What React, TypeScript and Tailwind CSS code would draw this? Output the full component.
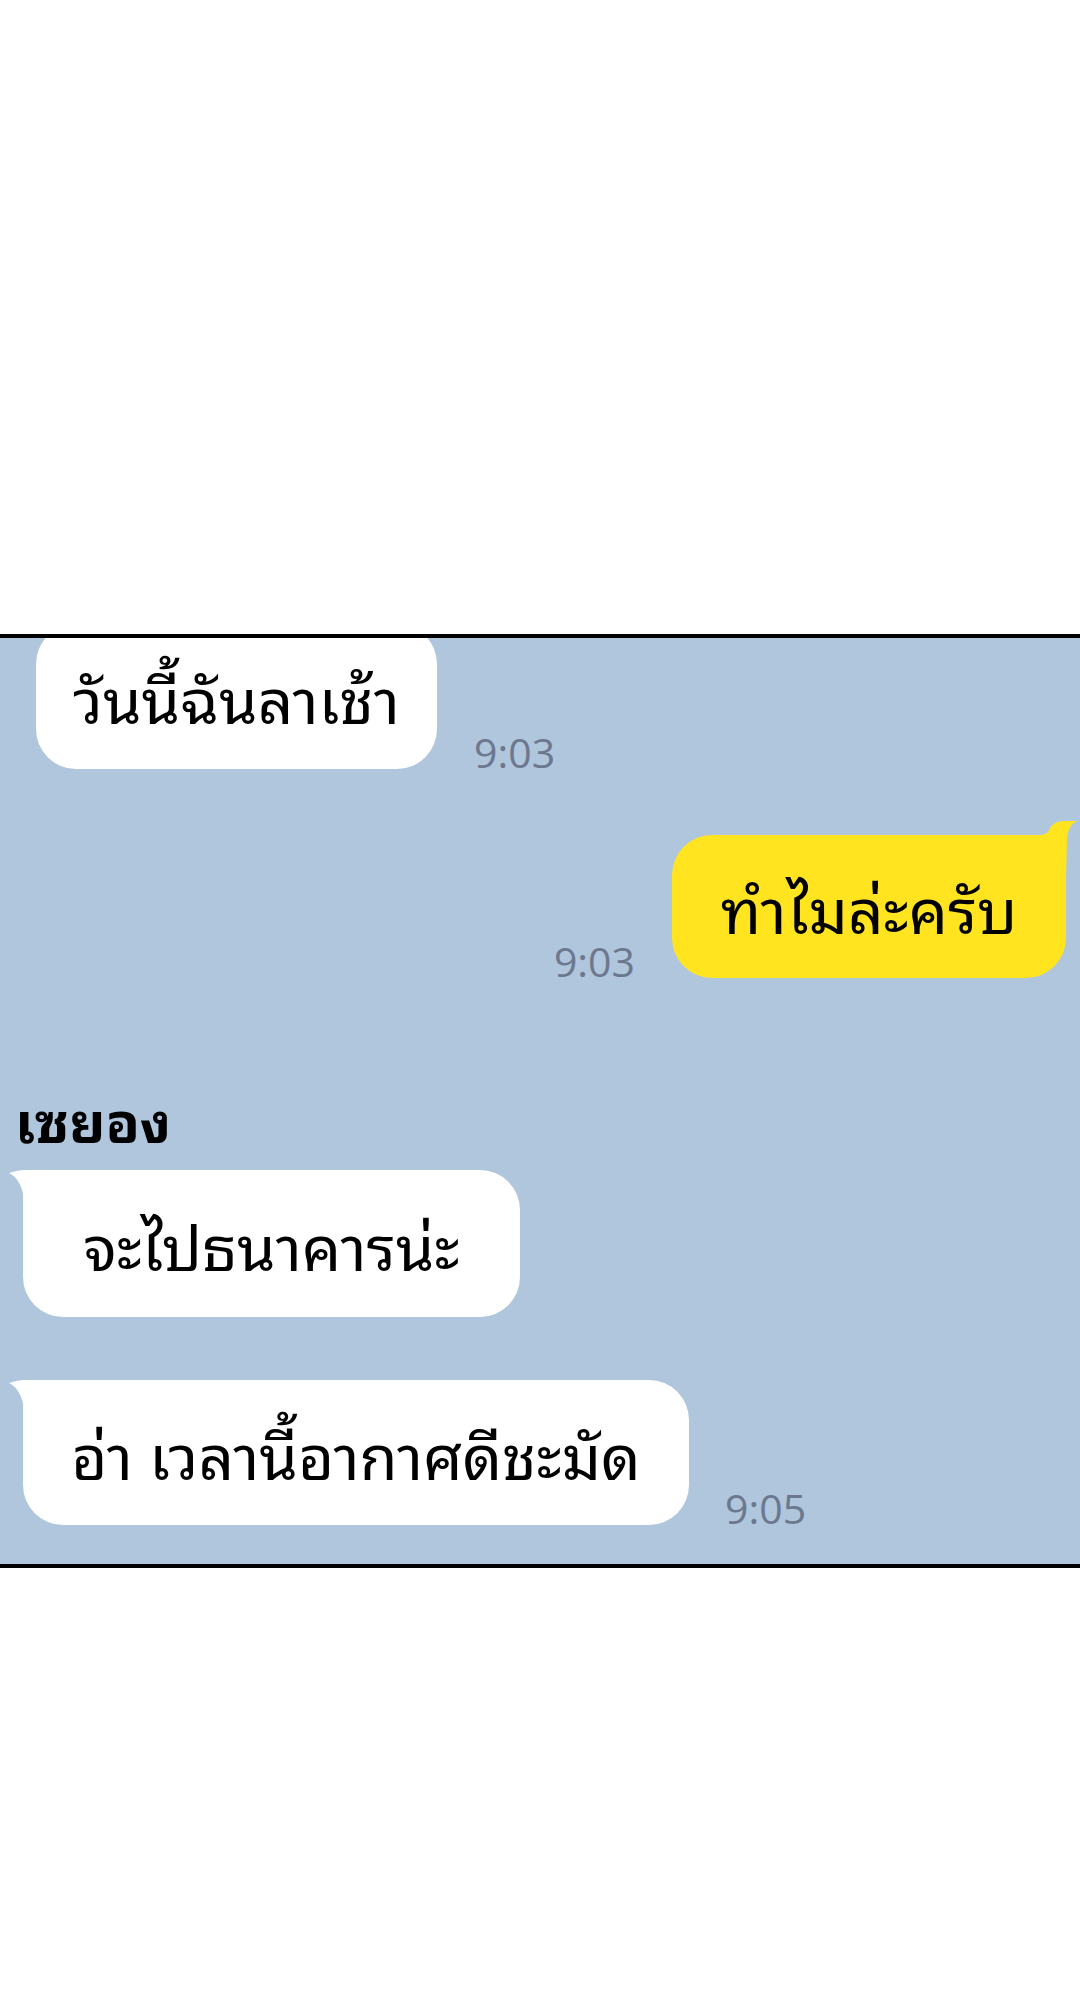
const thai = {
  fontFamily:
    '"Noto Sans Thai Looped", "Noto Looped Thai", "Noto Sans Thai UI", Loma, Garuda, Waree, "Noto Sans Thai", "Noto Sans", sans-serif',
}

const LeftTail = () => (
  <svg className="absolute -left-[14px] top-0" width="16" height="40" viewBox="0 0 16 40">
    <path d="M0 3 Q9 0 16 0 L16 40 Q15 10 0 3 Z" fill="#ffffff" />
  </svg>
)

const RightTail = () => (
  <svg className="absolute -right-[12px] -top-[16px]" width="40" height="60" viewBox="0 0 40 60">
    <path d="M0 16 L2 16 Q10 16 12 9 Q16 2 26 2 L39 2 Q30 6 29 20 L28 60 L0 60 Z" fill="#ffe41f" />
  </svg>
)

const Time = ({ children, className = '' }: { children: string; className?: string }) => (
  <span
    className={`text-[41px] leading-none text-[#6d788f] ${className}`}
    style={{ fontFamily: '"Open Sans", "Noto Sans", sans-serif' }}
  >
    {children}
  </span>
)

export default function App() {
  return (
    <div className="min-h-[2000px] w-[1080px] bg-white">
      <div className="h-[634px]" />
      <div className="h-[934px] overflow-hidden border-y-4 border-black bg-[#afc6dd]">
        {/* row 1 */}
        <div className="-mt-[14px] ml-[36px] flex items-end">
          <div
            className="flex h-[145px] w-[401px] items-center justify-center rounded-[40px] bg-white text-[62px] text-black"
            style={thai}
          >
            วันนี้ฉันลาเช้า
          </div>
          <Time className="-mb-[4px] ml-[37px]">9:03</Time>
        </div>

        {/* row 2 */}
        <div className="mt-[66px] flex items-end justify-end pr-[14px]">
          <Time className="-mb-[4px] mr-[37px]">9:03</Time>
          <div
            className="relative flex h-[143px] w-[394px] items-center justify-center rounded-[40px] rounded-tr-none bg-[#ffe41f] text-[62px] text-black"
            style={thai}
          >
            <RightTail />
            ทำไมล่ะครับ
          </div>
        </div>

        {/* name */}
        <div className="ml-[15px] mt-[110px] text-[56px] font-bold leading-[60px] text-black" style={thai}>
          เซยอง
        </div>

        {/* row 3 */}
        <div className="ml-[23px] mt-[22px] flex items-end">
          <div
            className="relative flex h-[147px] w-[497px] items-center justify-center rounded-[40px] rounded-tl-none bg-white text-[62px] text-black"
            style={thai}
          >
            <LeftTail />
            จะไปธนาคารน่ะ
          </div>
        </div>

        {/* row 4 */}
        <div className="ml-[23px] mt-[63px] flex items-end">
          <div
            className="relative flex h-[145px] w-[666px] items-center justify-center rounded-[40px] rounded-tl-none bg-white text-[62px] text-black"
            style={thai}
          >
            <LeftTail />
            อ่า เวลานี้อากาศดีชะมัด
          </div>
          <Time className="-mb-[4px] ml-[36px]">9:05</Time>
        </div>
      </div>
    </div>
  )
}
